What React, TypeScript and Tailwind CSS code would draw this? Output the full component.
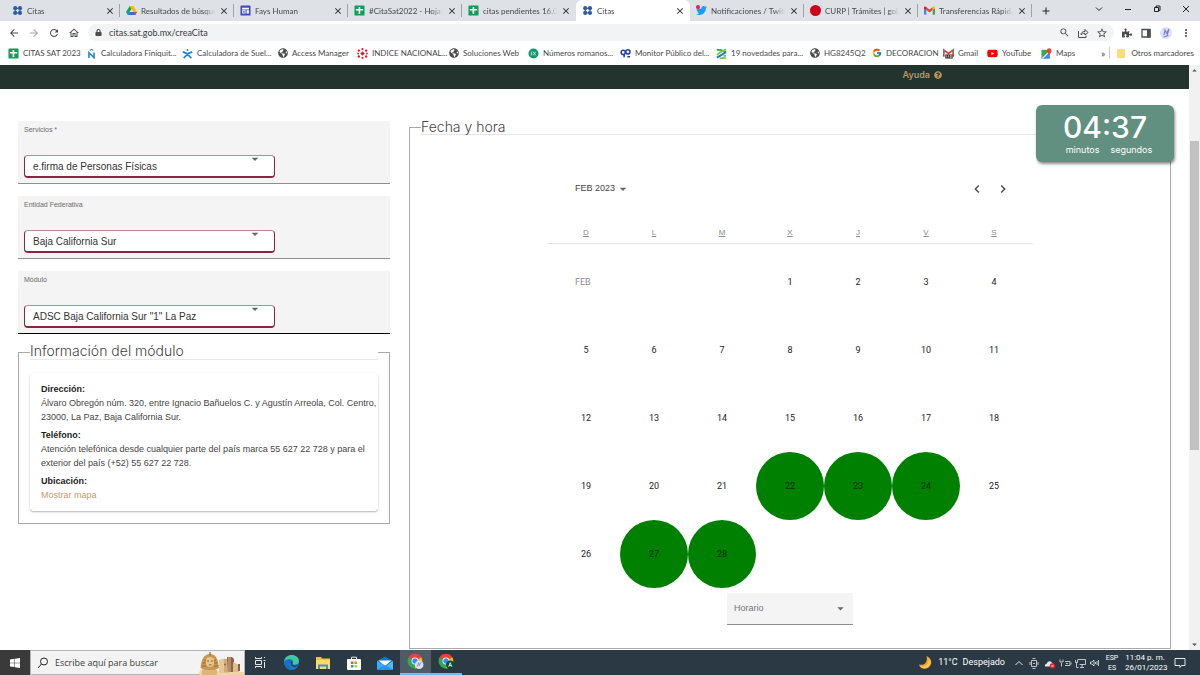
import React from "react";
import type { ReactNode } from "react";
import { FcGoogle } from "react-icons/fc";
import { FaGlobeAmericas, FaQuestionCircle, FaTwitter, FaLock, FaPuzzlePiece, FaYoutube } from "react-icons/fa";
import {
  MdArrowBack,
  MdArrowForward,
  MdRefresh,
  MdOutlineHome,
  MdSearch,
  MdStarBorder,
  MdMoreVert,
  MdClose,
  MdAdd,
  MdChevronLeft,
  MdChevronRight,
  MdArrowDropDown,
  MdArrowDropUp,
} from "react-icons/md";

/* ---------- favicons ---------- */

const ic = "size-[11px] shrink-0";

const CitasIcon = () => (
  <svg viewBox="0 0 12 12" className={ic} fill="#2c5fa0">
    <circle cx="3.5" cy="3.5" r="2.300" />
    <circle cx="8.700" cy="3.5" r="2.300" />
    <circle cx="3.5" cy="8.700" r="2.300" />
    <circle cx="8.700" cy="8.700" r="2.300" />
    <path d="M3.500 3.500h5.200v5.200H3.500z" fill="none" stroke="#2c5fa0" strokeWidth="1.200" />
  </svg>
);

const DriveIcon = () => (
  <svg viewBox="0 0 24 22" className={ic}>
    <path d="M8 1h8l-4 7-8 13-4-7z" fill="#0da960" />
    <path d="M8 1h8l8 13h-8z" fill="#ffba00" />
    <path d="M4 21l4-7h16l-4 7z" fill="#2d6fdd" />
    <path d="M12 8l4 6H8z" fill="#dee1e6" />
    <path d="M16 14h8l-4 7z" fill="#ea4335" />
  </svg>
);

const SitesIcon = () => (
  <svg viewBox="0 0 12 12" className={ic}>
    <rect x="0.5" y="0.5" width="11" height="11" rx="1" fill="#3f4db8" />
    <path d="M2.3 3h7.4v1.8H2.3zM2.3 5.8h3.8v3.4H2.3zM7.2 5.8h2.5v3.4H7.2z" fill="#fff" />
    <path d="M3.2 6.8h2v1.5h-2z" fill="#3f4db8" />
  </svg>
);

const SheetsIcon = () => (
  <svg viewBox="0 0 12 12" className={ic}>
    <rect x="0.5" y="0.5" width="11" height="11" rx="1" fill="#0f9d58" />
    <path d="M2 4.4h8v1.7H2zM5 2.3h1.8v7.6H5z" fill="#fff" />
  </svg>
);

const TwitterIcon = () => (
  <span className="relative flex">
    <FaTwitter className="size-[11px] shrink-0 text-[#1d9bf0]" />
    <span className="absolute left-0 top-0 size-1 rounded-full bg-[#e0245e]" />
  </span>
);

const CurpIcon = () => <span className="size-[11px] shrink-0 rounded-full bg-[#d0021b]" />;

const GmailIcon = () => (
  <svg viewBox="0 0 24 18" className={ic}>
    <path d="M0 2v14.500C0 17.300.7 18 1.500 18H5V7z" fill="#4285f4" />
    <path d="M24 2v14.500c0 .8-.7 1.500-1.500 1.500H19V7z" fill="#34a853" />
    <path d="M5 8V1.500L12 7l7-5.500V8l-7 5.500z" fill="#ea4335" />
    <path d="M0 3c0-2.600 3-3.800 5-1.500V8L0 4.500z" fill="#c5221f" />
    <path d="M24 3c0-2.600-3-3.800-5-1.500V8l5-3.500z" fill="#fbbc04" />
  </svg>
);

const NIcon = () => (
  <svg viewBox="0 0 12 12" className={ic} fill="none" stroke="#2f8fd6" strokeWidth="1.8">
    <path d="M3.200 11V5.200l5.600 5.400V4.800" />
    <path d="M4 2.800 6 1.500l2 1.300" strokeWidth="1.200" />
  </svg>
);

const FigureIcon = () => (
  <svg viewBox="0 0 12 12" className={ic} fill="none" stroke="#1b86d8" strokeWidth="1.900">
    <circle cx="6" cy="2.200" r="1" fill="#1b86d8" stroke="none" />
    <path d="M.8 4.200 6 6.400l5.200-2.200M1.800 11 6 6.800 10.200 11" />
  </svg>
);

const GlobeIcon = () => <FaGlobeAmericas className="size-[10px] shrink-0 text-[#4a4d51]" />;

const BurstIcon = () => (
  <svg viewBox="0 0 12 12" className={ic} fill="#d5202c">
    <path d="M6 3.500 8.500 6 6 8.500 3.500 6z" />
    <circle cx="6" cy="1.300" r="1.200" />
    <circle cx="6" cy="10.700" r="1.200" />
    <circle cx="2" cy="2.800" r="1.300" />
    <circle cx="10" cy="2.800" r="1.300" />
    <circle cx="2" cy="9.200" r="1.300" />
    <circle cx="10" cy="9.200" r="1.300" />
    <circle cx="1.200" cy="6" r="1" />
    <circle cx="10.800" cy="6" r="1" />
  </svg>
);

const RomanIcon = () => (
  <svg viewBox="0 0 12 12" className={ic}>
    <circle cx="6" cy="6" r="5.500" fill="#12976f" />
    <path d="M3.700 4v4M5.500 4l3 4M8.500 4l-3 4" stroke="#d9f3ea" strokeWidth=".9" />
  </svg>
);

const MonitorIcon = () => (
  <svg viewBox="0 0 12 12" className={ic} fill="none" stroke="#1f3fa6" strokeWidth="1.700">
    <circle cx="3.500" cy="4.800" r="2.300" />
    <circle cx="8.600" cy="4.200" r="2.300" />
    <path d="M4.500 7v3M8 9.600h3" />
  </svg>
);

const StripesIcon = () => (
  <svg viewBox="0 0 12 12" className={ic} fill="none" strokeWidth="2">
    <path d="M1 2h4l6 2.500" stroke="#32a852" />
    <path d="M1 7.500 5 4.500l6-3" stroke="#7ac943" />
    <path d="M1 10.500 6 7.500l5-3" stroke="#2177c9" />
    <path d="M4 11h7M8 8.500h3" stroke="#7ac943" />
  </svg>
);

const GmailBadgeIcon = () => (
  <svg viewBox="0 0 12 12" className={ic}>
    <path d="M.8 9.500V2.200L6 6l5.200-3.800v7.300" fill="none" stroke="#e03a2f" strokeWidth="1.900" />
    <path d="M.8 2.500v4" stroke="#4285f4" strokeWidth="1.500" />
    <path d="M11.200 2.500v4" stroke="#34a853" strokeWidth="1.500" />
    <path d="M2.500 7h8v4.500h-8z" fill="#3a2b2b" />
    <path d="M4 8v2.500M6 8v2.500M8 8h1v2.500H8z" stroke="#fff" strokeWidth=".6" fill="none" />
  </svg>
);

const MapsIcon = () => (
  <svg viewBox="0 0 12 12" className={ic}>
    <path d="M.5 2h9v9.500h-9z" fill="#34a853" />
    <path d="M.5 11.500 9.500 2.500v9z" fill="#4285f4" />
    <path d="M.5 11.500 7 5l1 1-5.500 5.500z" fill="#e8eaed" />
    <path d="M9 .3a2.500 2.500 0 0 1 2.500 2.600C11.500 4.800 9 7.500 9 7.500S6.500 4.800 6.500 2.900A2.500 2.500 0 0 1 9 .3z" fill="#ea4335" />
  </svg>
);

/* ---------- browser chrome ---------- */

type TabItem = { title: string; icon: ReactNode; active?: boolean; noDivider?: boolean };

const tabs: TabItem[] = [
  { title: "Citas", icon: <CitasIcon /> },
  { title: "Resultados de búsque", icon: <DriveIcon /> },
  { title: "Fays Human", icon: <SitesIcon /> },
  { title: "#CitaSat2022 - Hojas c", icon: <SheetsIcon /> },
  { title: "citas pendientes 16.01", icon: <SheetsIcon />, noDivider: true },
  { title: "Citas", icon: <CitasIcon />, active: true },
  { title: "Notificaciones / Twitte", icon: <TwitterIcon /> },
  { title: "CURP | Trámites | gob.", icon: <CurpIcon /> },
  { title: "Transferencias Rápida", icon: <GmailIcon /> },
];

function TabStrip() {
  return (
    <div className="flex h-[21px] items-stretch bg-[#dee1e6] pl-[6px]">
      {tabs.map((t, i) => (
        <div
          key={i}
          className={
            "flex min-w-0 max-w-[114px] flex-1 items-center gap-1 border-r pl-[6px] pr-1 " +
            (t.active ? "rounded-t-md border-white bg-white" : t.noDivider ? "border-transparent" : "border-[#a0a4aa]") +
            (t.active ? "" : " my-1")
          }
        >
          {t.icon}
          <span className="min-w-0 flex-1 overflow-hidden whitespace-nowrap [mask-image:linear-gradient(to_right,#000_85%,transparent)]">
            {t.title}
          </span>
          <button aria-label={"Cerrar " + t.title} className="flex shrink-0">
            <MdClose className="size-[10px] text-[#202124]" />
          </button>
        </div>
      ))}
      <button aria-label="Nueva pestaña" className="ml-2 flex items-center">
        <MdAdd className="size-3 text-[#202124]" />
      </button>
      <div className="ml-auto flex w-[107px] items-center justify-between pb-1 pr-2 text-[#202124]">
        <button aria-label="Buscar pestañas">
          <svg viewBox="0 0 12 12" className="size-3" fill="none" stroke="currentColor">
            <path d="M3 4.500l3 3 3-3" />
          </svg>
        </button>
        <button aria-label="Minimizar">
          <svg viewBox="0 0 12 12" className="size-3" fill="none" stroke="currentColor">
            <path d="M3 6.500h6" />
          </svg>
        </button>
        <button aria-label="Restaurar">
          <svg viewBox="0 0 12 12" className="size-3" fill="none" stroke="currentColor">
            <path d="M3.500 4.500h4v4h-4zM5 4V3h4v4.500H8" />
          </svg>
        </button>
        <button aria-label="Cerrar">
          <svg viewBox="0 0 12 12" className="size-3" fill="none" stroke="currentColor">
            <path d="M3 3l6 6M9 3l-6 6" />
          </svg>
        </button>
      </div>
    </div>
  );
}

function AddressBar() {
  return (
    <div className="flex h-[23px] items-center gap-2 bg-white pl-2 pr-2 text-[#4a4d51]">
      <button aria-label="Atrás"><MdArrowBack className="size-3" /></button>
      <button aria-label="Adelante"><MdArrowForward className="size-3 text-[#a5a8ac]" /></button>
      <button aria-label="Recargar"><MdRefresh className="size-3" /></button>
      <button aria-label="Inicio"><MdOutlineHome className="size-3" /></button>
      <div className="flex h-[17px] flex-1 items-center gap-[7px] rounded-full bg-[#f1f3f4] pl-[7px] pr-[6px]">
        <FaLock className="size-[7px]" />
        <input
          aria-label="Dirección"
          className="min-w-0 flex-1 bg-transparent text-[9px] text-[#3c4043] outline-none"
          defaultValue="citas.sat.gob.mx/creaCita"
        />
        <button aria-label="Zoom"><MdSearch className="size-[11px]" /></button>
        <button aria-label="Compartir">
          <svg viewBox="0 0 12 12" className="size-3" fill="none" stroke="currentColor">
            <path d="M1.500 4v6.500H9V8.500M4 8c0-2.500 1.500-3.500 4-3.500V2.500L11 5.500 8 8V6.300C6 6.200 5 6.800 4 8z" />
          </svg>
        </button>
        <button aria-label="Añadir a marcadores"><MdStarBorder className="size-3" /></button>
      </div>
      <button aria-label="Extensiones"><FaPuzzlePiece className="size-[10px]" /></button>
      <button aria-label="Panel lateral">
        <svg viewBox="0 0 12 12" className="size-3">
          <path d="M2 2.500h8v7.500H2z" fill="none" stroke="#4a4d51" strokeWidth="1.300" />
          <path d="M7 2h3.500v8.500H7z" fill="#4a4d51" />
        </svg>
      </button>
      <button aria-label="Perfil">
        <svg viewBox="0 0 12 12" className="size-3">
          <circle cx="6" cy="6" r="6" fill="#dfe2f6" />
          <path d="M4 8l1-5 1.500 3L9 2 7 8.500M3.500 10l5-1.500" fill="none" stroke="#7a83cf" strokeWidth="1.200" />
        </svg>
      </button>
      <button aria-label="Menú"><MdMoreVert className="size-3" /></button>
    </div>
  );
}

const bookmarks: { title: string; icon: ReactNode }[] = [
  { title: "CITAS SAT 2023", icon: <SheetsIcon /> },
  { title: "Calculadora Finiquit...", icon: <NIcon /> },
  { title: "Calculadora de Suel...", icon: <FigureIcon /> },
  { title: "Access Manager", icon: <GlobeIcon /> },
  { title: "INDICE NACIONAL...", icon: <BurstIcon /> },
  { title: "Soluciones Web", icon: <GlobeIcon /> },
  { title: "Números romanos...", icon: <RomanIcon /> },
  { title: "Monitor Público del...", icon: <MonitorIcon /> },
  { title: "19 novedades para...", icon: <StripesIcon /> },
  { title: "HG8245Q2", icon: <GlobeIcon /> },
  { title: "DECORACION", icon: <FcGoogle className="size-[10px] shrink-0" /> },
  { title: "Gmail", icon: <GmailBadgeIcon /> },
  { title: "YouTube", icon: <FaYoutube className="size-[11px] shrink-0 text-[#f00]" /> },
  { title: "Maps", icon: <MapsIcon /> },
];

function BookmarksBar() {
  return (
    <div className="flex h-[21px] items-center bg-white pb-[3px] pl-2 pr-[6px]">
      <nav className="grid min-w-0 flex-1 grid-cols-[78px_96px_96px_79px_92px_79px_92px_96px_94px_62px_71px_44px_54px_auto] overflow-hidden">
        {bookmarks.map((b) => (
          <a key={b.title} href="#" className="flex items-center gap-1 whitespace-nowrap">
            {b.icon}
            {b.title}
          </a>
        ))}
      </nav>
      <button aria-label="Más marcadores" className="pr-1 text-[10px] leading-3">»</button>
      <a href="#" className="flex items-center gap-1 whitespace-nowrap border-l border-[#c8ccd0] pl-[7px]">
        <span className="h-[9px] w-2 bg-[#fbdc7c]" />
        <span className="pl-[2px]">Otros marcadores</span>
      </a>
    </div>
  );
}

/* ---------- page ---------- */

function Field({ id, label, value, last }: { id: string; label: string; value: string; last?: boolean }) {
  return (
    <div className={"h-[63px] border-b bg-[#f4f4f4] px-[6px] pt-1 " + (last ? "border-black" : "border-[#8f8f8f]")}>
      <label htmlFor={id} className="block text-[7px] leading-[10px] text-[#6b6b6b]">{label}</label>
      <div className="relative mt-5 w-[251px]">
        <select
          id={id}
          defaultValue={value}
          className="block h-[23px] w-full appearance-none rounded border border-b-2 border-[#8a2440] border-t-[#b98a97] bg-white px-2 text-[10px] text-[#333] outline-none"
        >
          <option>{value}</option>
        </select>
        <MdArrowDropDown className="pointer-events-none absolute right-3 -top-1 size-4 text-[#666]" />
      </div>
    </div>
  );
}

function ModuleInfo() {
  return (
    <fieldset className="mt-[10px] min-w-0 border border-[#a9a9a9] px-[11px] pb-3">
      <legend className="h-4 w-full border-b border-[#e9e9e9] font-['Inter'] text-[14px] font-light leading-[14px] text-[#444]">
        Información del módulo
      </legend>
      <div className="mt-[13px] rounded py-[9px] pl-[11px] text-[#444] shadow-[0_1px_2px_rgba(0,0,0,0.3)]">
        <dl className="text-[9px] leading-[14px]">
          <dt className="font-bold text-[#222]">Dirección:</dt>
          <dd className="mb-1">
            Álvaro Obregón núm. 320, entre Ignacio Bañuelos C. y Agustín Arreola, Col. Centro, 23000, La Paz, Baja
            California Sur.
          </dd>
          <dt className="font-bold text-[#222]">Teléfono:</dt>
          <dd className="mb-1">
            Atención telefónica desde cualquier parte del país marca 55 627 22 728 y para el exterior del país (+52) 55
            627 22 728.
          </dd>
          <dt className="font-bold text-[#222]">Ubicación:</dt>
          <dd><a href="#" className="text-[#c39a6b]">Mostrar mapa</a></dd>
        </dl>
      </div>
    </fieldset>
  );
}

const weeks: (number | null)[][] = [
  [5, 6, 7, 8, 9, 10, 11],
  [12, 13, 14, 15, 16, 17, 18],
  [19, 20, 21, 22, 23, 24, 25],
  [26, 27, 28, null, null, null, null],
];
const available = [22, 23, 24, 27, 28];

function Day({ n }: { n: number | null }) {
  return (
    <td className="h-[68px] p-0">
      {n !== null && (
        <button
          className={
            "flex aspect-square w-full items-center justify-center rounded-full pt-[2px] " +
            (available.includes(n) ? "bg-[#008000] text-[#0b2b0b]" : "text-[#222]")
          }
        >
          {n}
        </button>
      )}
    </td>
  );
}

function Calendar() {
  return (
    <div className="mx-auto max-w-[486px] pt-[46px]">
      <div className="flex items-center justify-between pl-7 pr-[22px] text-[#444]">
        <button className="flex items-center text-[9px]">
          FEB 2023
          <MdArrowDropDown className="size-4 text-[#666]" />
        </button>
        <div className="flex gap-[10px]">
          <button aria-label="Mes anterior"><MdChevronLeft className="size-4" /></button>
          <button aria-label="Mes siguiente"><MdChevronRight className="size-4" /></button>
        </div>
      </div>
      <div className="mt-[27px] border-b border-[#e6e6e6]">
        <div className="grid grid-cols-7 px-[5px] pb-[2px] text-center text-[8px] leading-[17px] text-[#8a8a8a]">
          {["D", "L", "M", "X", "J", "V", "S"].map((d) => (
            <abbr key={d} className="underline">{d}</abbr>
          ))}
        </div>
      </div>
      <div className="px-[5px] pt-1">
        <table className="w-full table-fixed border-collapse font-['Roboto'] text-[9px]">
          <tbody>
            <tr>
              <td colSpan={3} className="h-[68px] p-0 pl-[23px] pt-[2px] text-[#8a8a8a]">FEB</td>
              {[1, 2, 3, 4].map((n) => <Day key={n} n={n} />)}
            </tr>
            {weeks.map((w, i) => (
              <tr key={i}>{w.map((n, j) => <Day key={j} n={n} />)}</tr>
            ))}
          </tbody>
        </table>
      </div>
    </div>
  );
}

function Timer() {
  return (
    <div className="absolute right-[15px] top-10 h-[57px] w-[138px] rounded-md bg-[#619080] text-center font-['Inter'] text-white shadow-[1px_2px_3px_rgba(0,0,0,0.45)]">
      <div className="pt-1 text-[30px] font-medium leading-9">04:37</div>
      <div className="flex justify-center gap-[11px] pl-2 text-[9px] leading-[9px]">
        <span>minutos</span>
        <span>segundos</span>
      </div>
    </div>
  );
}

function Page() {
  return (
    <div className="flex min-h-0 flex-1 bg-white font-['Liberation_Sans',sans-serif]">
      <div className="relative min-w-0 flex-1 overflow-hidden">
        <header className="flex h-6 justify-end bg-[#23332d] pr-[247px] pt-[3px]">
          <a href="#" className="flex h-[14px] items-center gap-1 font-['Inter'] text-[9px] font-semibold text-[#bc955c]">
            Ayuda <FaQuestionCircle className="size-2" />
          </a>
        </header>
        <main className="grid grid-cols-[372fr_762fr] items-start gap-[19px] px-[18px] pt-8">
          <section>
            <div className="flex flex-col gap-3">
              <Field id="servicios" label="Servicios *" value="e.firma de Personas Físicas" />
              <Field id="entidad" label="Entidad Federativa" value="Baja California Sur" />
              <Field id="modulo" label="Módulo" value={'ADSC Baja California Sur "1" La Paz'} last />
            </div>
            <ModuleInfo />
          </section>
          <fieldset className="-mt-px min-w-0 border border-[#a9a9a9] px-[11px] pb-[23px]">
            <legend className="h-[15px] w-full border-b border-[#e6e6e6] font-['Inter'] text-[14px] font-light leading-[14px] text-[#444]">
              Fecha y hora
            </legend>
            <Calendar />
            <div className="relative mx-auto mt-[5px] w-[126px]">
              <select
                aria-label="Horario"
                className="block h-8 w-full appearance-none border-b border-[#8f8f8f] bg-[#f4f4f4] px-[7px] text-[9px] text-[#777] outline-none"
              >
                <option>Horario</option>
              </select>
              <MdArrowDropDown className="pointer-events-none absolute right-[5px] top-2 size-[15px] text-[#666]" />
            </div>
          </fieldset>
        </main>
        <Timer />
      </div>
      <div className="flex w-[11px] flex-col items-center bg-[#f1f1f1] text-[#505050]">
        <MdArrowDropUp className="size-[11px]" />
        <div className="mt-[65px] h-[309px] w-[9px] bg-[#c1c1c1]" />
        <MdArrowDropDown className="mt-auto size-[11px]" />
      </div>
    </div>
  );
}

/* ---------- taskbar ---------- */

const Chrome = ({ badge }: { badge: ReactNode }) => (
  <svg viewBox="0 0 32 32" className="size-[17px]">
    <path d="M15 15 3 8A14 14 0 0 1 27 8z" fill="#ea4335" />
    <path d="M15 15 27 8a14 14 0 0 1-12 21z" fill="#fbbc04" />
    <path d="M15 15v14A14 14 0 0 1 3 8z" fill="#34a853" />
    <circle cx="15" cy="15" r="6.500" fill="#fff" />
    <circle cx="15" cy="15" r="5" fill="#4285f4" />
    {badge}
  </svg>
);

const apps: { name: string; icon: ReactNode; cls?: string }[] = [
  {
    name: "Vista de tareas",
    icon: (
      <svg viewBox="0 0 13 13" className="size-[13px]" fill="none" stroke="#e6e9eb">
        <path d="M1.500 1v1.500h6V1M1.500 12v-1.500h6V12M1.500 4.500h6v4h-6zM10.500 1v1M10.500 6v6M9.500 4.500h2" />
      </svg>
    ),
  },
  {
    name: "Edge",
    icon: (
      <svg viewBox="0 0 32 32" className="size-[17px]">
        <circle cx="16" cy="16" r="14" fill="#1b7fd0" />
        <path d="M2 15C3 6 10 2 16 2c8 0 14 5 14 11 0 5-4 7-8 7-3 0-4-1-4-2s2-2 1-5c-1-4-11-6-17 2z" fill="#3ec9a0" />
        <path d="M2 15c6-7 12-5 14-2-5 1-7 11 2 15-8 3-16-4-16-13z" fill="#1571c2" />
        <path d="M16 13c2 1 3 4 2 5s0 3 4 3c3 0 6-1 7-3-1 5-5 8-8 7-6-1-9-8-5-12z" fill="#274a68" />
      </svg>
    ),
  },
  {
    name: "Explorador de archivos",
    icon: (
      <svg viewBox="0 0 16 14" className="size-4">
        <path d="M1 1h5l1 1.500h8V13H1z" fill="#f5c13d" />
        <path d="M1 4h14v9H1z" fill="#ffd966" />
        <path d="M3 8.500h10V13h-2v-2.500H5V13H3z" fill="#3b8ede" />
      </svg>
    ),
  },
  {
    name: "Microsoft Store",
    icon: (
      <svg viewBox="0 0 16 16" className="size-4">
        <path d="M5.500 4V2.200h5V4" fill="none" stroke="#e8edf0" />
        <rect x="1" y="4" width="14" height="11" rx="1" fill="#fff" />
        <path d="M5 6.500h2.500V9H5z" fill="#f25022" />
        <path d="M8.500 6.500H11V9H8.500z" fill="#7fba00" />
        <path d="M5 10h2.500v2.500H5z" fill="#00a4ef" />
        <path d="M8.500 10H11v2.500H8.500z" fill="#ffb900" />
      </svg>
    ),
  },
  {
    name: "Correo",
    icon: (
      <svg viewBox="0 0 16 14" className="size-4">
        <path d="M0 5l8-4.500L16 5v8.500H0z" fill="#1673c4" />
        <path d="M1.500 4.500h13L8 10z" fill="#fff" />
        <path d="M0 5l8 4.500V13.500H0z" fill="#35aef5" />
        <path d="M16 5 4 13.500h12z" fill="#4cbcf8" />
        <path d="M0 13.500h16L8 9z" fill="#2a97e6" />
      </svg>
    ),
  },
  {
    name: "Chrome, perfil 1",
    cls: "bg-[#4d5c66] border-b-2 border-[#76b9ed]",
    icon: (
      <Chrome
        badge={
          <>
            <circle cx="23" cy="22" r="8" fill="#dde1f5" />
            <path d="M19 26l3-8 1 6 4-7" fill="none" stroke="#7d87cc" strokeWidth="1.500" />
          </>
        }
      />
    ),
  },
  {
    name: "Chrome, perfil 2",
    cls: "border-b-2 border-[#76b9ed]",
    icon: (
      <Chrome
        badge={
          <>
            <circle cx="23" cy="22" r="8" fill="#0c4a3c" />
            <path d="M20 26l3-8 3 8M21 23.500h4" fill="none" stroke="#fff" strokeWidth="1.500" />
          </>
        }
      />
    ),
  },
];

function Sphinx() {
  return (
    <svg viewBox="0 0 45 24" className="h-6 w-[45px] shrink-0">
      <path d="M0 24c0-4 2-6 5-7l15 3 25 1v3z" fill="#f0d3a6" />
      <path d="M20 9.500c3-2 7-2 10-1v13H20z" fill="#d3a97a" />
      <path d="M20 9.500c2-1.500 4-1.500 5-1.500v13.500h-5z" fill="#e8c79b" />
      <path d="M28 6h5l2 2v13h-6z" fill="#8a6648" />
      <path d="M29 6h3v15h-3z" fill="#b98d63" />
      <path d="M34 11l6 3v7h-6z" fill="#e0bd90" />
      <path d="M39 13h2v7h-2z" fill="#8d6443" />
      <circle cx="26" cy="13.500" r="1" fill="#8d6443" />
      <path d="M1.500 17C2.500 8 5 3 11 3s8 5 9 14l-4 2H6z" fill="#c89850" />
      <path d="M3 15h4M3.500 12h3M15 12h3.500M15 15h4M5 9l2 .5M17 9l-2 .5" stroke="#8a6233" strokeWidth=".8" />
      <path d="M7 8c1-2.500 7-2.500 8 0v5c-1 4-7 4-8 0z" fill="#e9c48d" />
      <path d="M8 10h2M12 10h2M10 13.800h2.500" stroke="#6d4a28" strokeWidth=".8" />
      <path d="M11 1v3.500" stroke="#9a6a30" strokeWidth="1.300" />
      <path d="M3 19h15v5H3z" fill="#deb47a" />
    </svg>
  );
}

function Taskbar() {
  return (
    <footer className="flex h-[25px] shrink-0 items-stretch bg-[#2a3943] font-['Open_Sans',sans-serif] text-white">
      <button aria-label="Inicio" className="flex w-[30px] items-center justify-center bg-[#3a3a3a]">
        <svg viewBox="0 0 10 10" className="size-[10px]" fill="#fff">
          <path d="M0 1.400 4.500.8v3.900H0zM5 .7 10 0v4.700H5zM0 5.200h4.500v3.900L0 8.500zM5 5.200h5V10l-5-.7z" />
        </svg>
      </button>
      <div className="flex w-[215px] items-center gap-[6px] border border-[#b4b4b4] bg-[#f3f3f3] pl-[6px]">
        <svg viewBox="0 0 12 12" className="size-3 shrink-0" fill="none" stroke="#222">
          <circle cx="7" cy="4.500" r="3.500" />
          <path d="M4.500 7 1 11" />
        </svg>
        <input
          aria-label="Buscar"
          placeholder="Escribe aquí para buscar"
          className="min-w-0 flex-1 bg-transparent text-[9px] outline-none placeholder:text-[#3c3c3c]"
        />
        <Sphinx />
      </div>
      {apps.map((a) => (
        <button key={a.name} aria-label={a.name} className={"flex w-[31px] items-center justify-center " + (a.cls ?? "")}>
          {a.icon}
        </button>
      ))}
      <div className="ml-auto flex items-center gap-1 pr-[14px] font-['Roboto'] text-[9px]">
        <svg viewBox="0 0 16 16" className="size-[15px]">
          <path d="M9 1c6 2 7 9 2 12.500C7 16 2 14 1 10c5 2 10-2 8-9z" fill="#f5a623" />
          <path d="M11 3c3 3 3 8-1 10-3 2-6 1-8-1 7 1 11-3 9-9z" fill="#ffc65c" />
        </svg>
        <span className="ml-[1px]">11°C</span>
        <span className="whitespace-nowrap pl-[1px] pr-[6px]">Despejado</span>
        <svg viewBox="0 0 84 12" className="h-3 w-[84px]" fill="none" stroke="#e6e9eb">
          <path d="M.5 8 4 4.500 7.500 8" />
          <path d="M16.500 3.500h5v6h-5zM17.500 1.500h3M17.500 11.500h3M18 6.500h2M15 5v3M23 5v3" strokeWidth=".8" />
          <path d="M30 9.500c-.5-2 1-3 2-3 .5-3 4-3 5-.5 1.500.3 1.500 2 1 3.500z" fill="#e6e9eb" stroke="none" />
          <circle cx="37.500" cy="9" r="2.700" fill="#d9232e" stroke="none" />
          <path d="M36.500 8l2 2M38.500 8l-2 2" strokeWidth=".7" />
          <path d="M46.500 6v3.500M45 2.500v2.500h3V2.500M50 4.500h5v4h-5M56 5.500v2M51 6.500h2" strokeWidth=".8" />
          <path d="M62.500 2.500h8v5h-6M65 10.500h4M67 7.500v3M61.500 5.500v5h2M60.500 3v2.500h2V3" strokeWidth=".8" />
          <path d="M75.500 5h1.500l2-2v6l-2-2h-1.500zM80.500 5v2M82 4v4M83.500 3v6" strokeWidth=".8" />
        </svg>
        <div className="w-[18px] text-center text-[7px] leading-[10px]">ESP<br />ES</div>
        <div className="w-[40px] whitespace-nowrap text-center text-[8px] leading-[10px]">11:04 p. m.<br />26/01/2023</div>
        <svg viewBox="0 0 12 12" className="ml-[5px] size-3" fill="none" stroke="#e6e9eb">
          <path d="M1 1.500h10v7H7.500L6 10.500V8.500H1z" />
        </svg>
      </div>
    </footer>
  );
}

export default function App() {
  return (
    <div className="flex h-screen flex-col overflow-hidden bg-white">
      <div className="shrink-0 font-['Lato',sans-serif] text-[8px] leading-3 text-[#45494d]">
        <TabStrip />
        <AddressBar />
        <BookmarksBar />
      </div>
      <Page />
      <Taskbar />
    </div>
  );
}
